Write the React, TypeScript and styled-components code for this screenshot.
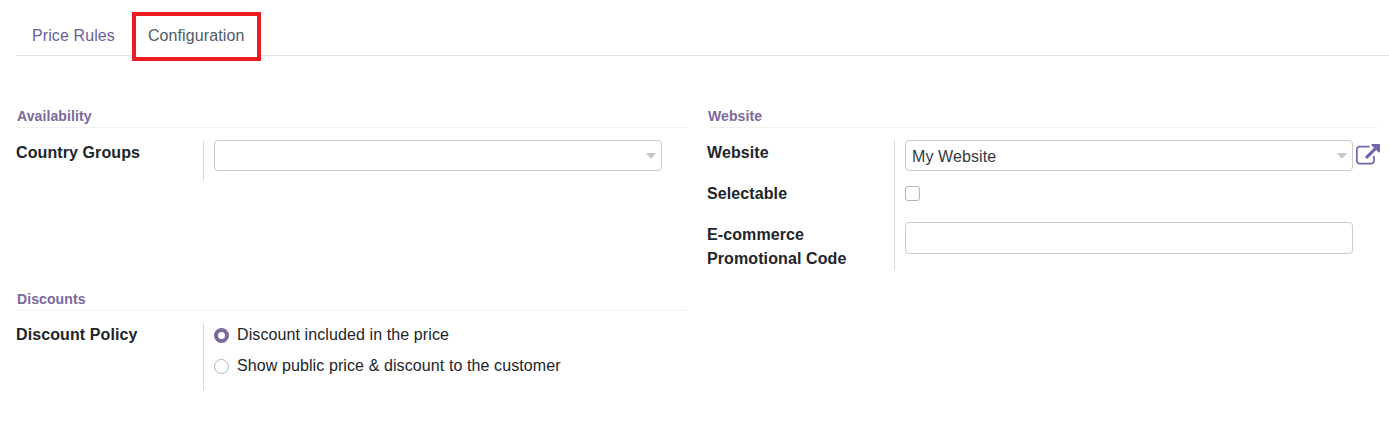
import React from "react";
import styled, { createGlobalStyle } from "styled-components";

const GlobalStyle = createGlobalStyle`
  html, body { margin: 0; padding: 0; background: #fff; }
  body { font-family: "Liberation Sans", Arial, sans-serif; font-size: 16px; line-height: 24px; letter-spacing: 0.1px; color: #212529; }
`;

const Page = styled.div`
  height: 428px;
  overflow: hidden;
  padding-left: 16px;
`;

const TabBar = styled.div`
  display: flex;
  height: 55px;
  align-items: flex-end;
  border-bottom: 1px solid #dee2e6;
`;

const Tab = styled.div<{ $active?: boolean }>`
  position: relative;
  padding: 24px 16px 7px;
  margin-right: 1px;
  margin-bottom: -1px;
  border-bottom: 1px solid ${(p) => (p.$active ? "#fff" : "transparent")};
  color: ${(p) => (p.$active ? "#4f5b69" : "#6a5f99")};
`;

const Highlight = styled.span`
  position: absolute;
  left: 0;
  right: -1px;
  top: 12px;
  bottom: -6px;
  border: 4px solid #ed1c24;
`;

const Columns = styled.div`
  display: grid;
  grid-template-columns: 670px 670px;
  column-gap: 21px;
  padding-top: 52px;
`;

const Column = styled.div`
  display: flex;
  flex-direction: column;
  gap: 110px;
`;

const Title = styled.div`
  margin-left: 1px;
  height: 19px;
  font-size: 14px;
  line-height: 16px;
  font-weight: 700;
  color: #7b689e;
  border-bottom: 1px solid #f0f0f0;
`;

const Fields = styled.div`
  display: grid;
  grid-template-columns: 187px 1fr;
  padding-top: 12px;
`;

const Label = styled.div<{ $flush?: boolean }>`
  padding-top: ${(p) => (p.$flush ? 0 : 1)}px;
  margin-bottom: ${(p) => (p.$flush ? 0 : -1)}px;
  font-weight: 700;
`;

const Value = styled.div<{ $top?: number; $bottom?: number }>`
  display: flex;
  flex-direction: column;
  align-items: flex-start;
  padding: ${(p) => p.$top ?? 0}px 0 ${(p) => p.$bottom ?? 10}px 10px;
  border-left: 1px solid #d8dadd;
`;

const SelectRow = styled.div`
  display: flex;
  align-items: center;
  gap: 3px;
`;

const SelectBox = styled.div`
  position: relative;
  box-sizing: border-box;
  width: 448px;
  height: 31px;
  padding: 4px 6px 2px 6px;
  border: 1px solid #cccccc;
  border-radius: 4px;
  color: #343a40;
`;

const Caret = styled.span`
  position: absolute;
  right: 5px;
  top: 12px;
  width: 0;
  height: 0;
  border-left: 5px solid transparent;
  border-right: 5px solid transparent;
  border-top: 6px solid #c8c8c8;
`;

const TextBox = styled.div`
  box-sizing: border-box;
  width: 448px;
  height: 32px;
  border: 1px solid #cccccc;
  border-radius: 4px;
`;

const Checkbox = styled.span`
  box-sizing: border-box;
  display: block;
  width: 15px;
  height: 15px;
  border: 1px solid #adb5bd;
  border-radius: 3px;
`;

const RadioRow = styled.div`
  display: flex;
  align-items: center;
  gap: 8px;
  height: 24px;
  margin-bottom: 7px;
  &:last-child { margin-bottom: 0; }
`;

const Radio = styled.span<{ $checked?: boolean }>`
  box-sizing: border-box;
  display: block;
  width: 15px;
  height: 15px;
  border-radius: 50%;
  border: ${(p) => (p.$checked ? "4.5px solid #7b689e" : "1px solid #adb5bd")};
  background: #fff;
`;

const ExternalIcon = () => (
  <svg width="24" height="24" viewBox="0 0 1792 1792" fill="#6f66ad" aria-hidden="true">
    <path d="M1408 928v320q0 119-84.5 203.5t-203.5 84.5h-832q-119 0-203.5-84.5t-84.5-203.5v-832q0-119 84.5-203.5t203.5-84.5h704q14 0 23 9t9 23v64q0 14-9 23t-23 9h-704q-66 0-113 47t-47 113v832q0 66 47 113t113 47h832q66 0 113-47t47-113v-320q0-14 9-23t23-9h64q14 0 23 9t9 23zm384-864v512q0 26-19 45t-45 19-45-19l-176-176-652 652q-10 10-23 10t-23-10l-114-114q-10-10-10-23t10-23l652-652-176-176q-19-19-19-45t19-45 45-19h512q26 0 45 19t19 45z" />
  </svg>
);

export default function App() {
  return (
    <Page>
      <GlobalStyle />
      <TabBar>
        <Tab>Price Rules</Tab>
        <Tab $active>
          Configuration
          <Highlight />
        </Tab>
      </TabBar>
      <Columns>
        <Column>
          <section>
            <Title>Availability</Title>
            <Fields>
              <Label>Country Groups</Label>
              <Value>
                <SelectBox>
                  <Caret />
                </SelectBox>
              </Value>
            </Fields>
          </section>
          <section>
            <Title>Discounts</Title>
            <Fields>
              <Label $flush>Discount Policy</Label>
              <Value $bottom={12}>
                <RadioRow>
                  <Radio $checked />
                  Discount included in the price
                </RadioRow>
                <RadioRow>
                  <Radio />
                  Show public price &amp; discount to the customer
                </RadioRow>
              </Value>
            </Fields>
          </section>
        </Column>
        <Column>
          <section>
            <Title>Website</Title>
            <Fields>
              <Label>Website</Label>
              <Value>
                <SelectRow>
                  <SelectBox>
                    My Website
                    <Caret />
                  </SelectBox>
                  <ExternalIcon />
                </SelectRow>
              </Value>
              <Label>Selectable</Label>
              <Value $top={5} $bottom={21}>
                <Checkbox />
              </Value>
              <Label>
                E-commerce
                <br />
                Promotional Code
              </Label>
              <Value $bottom={16}>
                <TextBox />
              </Value>
            </Fields>
          </section>
        </Column>
      </Columns>
    </Page>
  );
}
